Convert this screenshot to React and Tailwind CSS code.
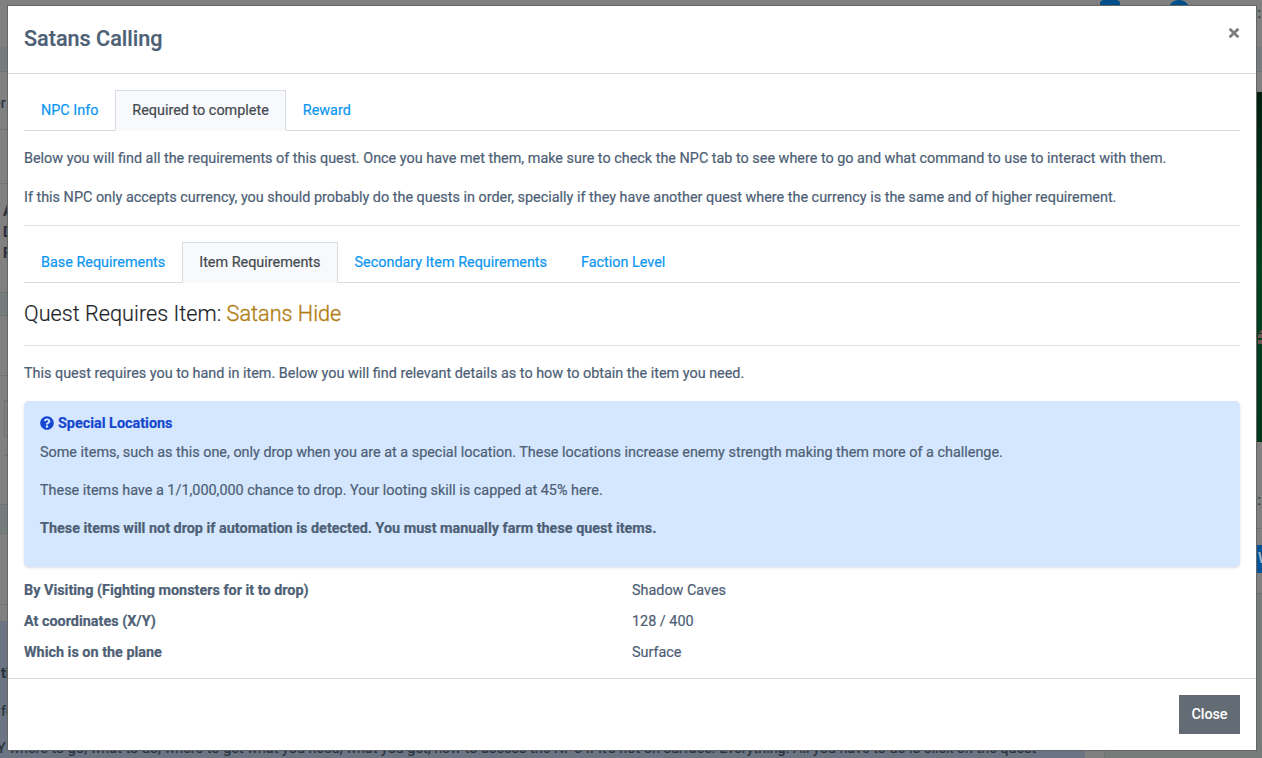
import React from "react";
import { FaQuestionCircle } from "react-icons/fa";

function Tabs({ items, active }) {
  return (
    <div className="flex h-[41px] border-b border-[#d8dbe0]">
      {items.map((t) => (
        <button
          key={t}
          className={
            "h-[41px] shrink-0 whitespace-nowrap border px-4 pt-px " +
            (t === active
              ? "border-[#d8dbe0] border-b-[#f8f9fc] bg-[#f8f9fc] text-[#44494f]"
              : "border-transparent text-[#0c96f2]")
          }
        >
          {t}
        </button>
      ))}
    </div>
  );
}

function Page() {
  return (
    <div className="flex h-full bg-[#808080] text-[#27303b]">
      <div className="flex w-[1085px] shrink-0 flex-col overflow-hidden">
        <div className="h-[47px]" />
        <div className="h-[25px] border-b border-[#6f7373] bg-[#757c7c]" />
        <div className="flex h-[58px] items-center border-b border-[#707274]">
          <span className="-ml-[7px] pt-[6px]">er</span>
        </div>
        <div className="h-[54px] border-b border-[#707274]" />
        <div className="h-[108px] pl-[3px] pt-[17px] font-bold leading-[21px]">
          <p>A</p>
          <p>D</p>
          <p>F</p>
        </div>
        <div className="h-[24px] border-y border-[#6f7373] bg-[#757c7c]" />
        <div className="h-[60px] border-b border-[#707274]" />
        <div className="h-[80px] pl-1 pt-6">
          <div className="h-[37px] border border-[#6c7075]" />
          <div className="mt-[18px] h-px bg-[#707274]" />
        </div>
        <div className="mt-[48px] h-[30px] shrink-0 border-y border-[#6f7373] bg-[#757c7c]" />
        <div className="h-[71px] shrink-0 border-b border-[#707274]" />
        <div className="mt-4 h-[137px] shrink-0 bg-[#6a7482] pt-[43px]">
          <p className="pl-px font-bold leading-5">ti</p>
          <p className="mt-[18px] pl-px leading-5">fo</p>
          <p className="-ml-[3px] mt-[17px] whitespace-nowrap leading-5">
            Y where to go, what to do, where to get what you need, what you get, how to access the NPC if it's not on surface. Everything. All you have to do is click on the quest
          </p>
        </div>
      </div>
      <div className="flex w-[177px] shrink-0 flex-col overflow-hidden">
        <div className="flex h-[47px] justify-between">
          <div className="ml-[15px] h-4 w-5 rounded bg-[#004f8a]" />
          <div className="-mr-[11px] h-[22px] w-[22px] rounded-full bg-[#004f8a]" />
          <span className="pr-px pt-[3px]">Gold:</span>
        </div>
        <div className="h-[25px] border-b border-[#6f7373] bg-[#757c7c]" />
        <div className="h-5" />
        <div className="flex h-[350px] items-center justify-end bg-gradient-to-b from-[#001f10] via-[#00431e] to-[#00371a]">
          <div className="-mr-1 mt-[138px] flex h-[15px] w-2 flex-col justify-between overflow-hidden rounded-tl-full">
            <div className="h-1 bg-[#725354]" />
            <div className="h-1 bg-[#725354]" />
            <div className="h-1 bg-[#725354]" />
          </div>
        </div>
        <div className="flex h-[87px] items-end justify-end border-b border-[#707274] pb-[16px] pr-px">Level:</div>
        <div className="h-[65px] border-b border-[#6b6f70] pt-4">
          <div className="h-7 overflow-hidden bg-[#045497] pl-[173px] font-medium leading-7 text-[#a8b8c8]">W</div>
        </div>
        <div className="ml-[19px] flex-1 border-l border-[#6f7373] bg-[#767c7a]" />
      </div>
    </div>
  );
}

const facts = [
  ["By Visiting (Fighting monsters for it to drop)", "Shadow Caves"],
  ["At coordinates (X/Y)", "128 / 400"],
  ["Which is on the plane", "Surface"],
];

export default function App() {
  return (
    <div className="relative h-[758px] w-[1262px] overflow-hidden font-['Roboto',sans-serif] text-[14.4px] [-webkit-text-stroke:0.2px]">
      <Page />
      <div className="absolute left-[7px] top-[5px] flex h-[746px] w-[1250px] flex-col border border-[#646666] bg-white leading-[21.6px] text-[#4d6075]">
        <header className="flex h-[68px] shrink-0 items-start justify-between border-b border-[#d8dbe0] px-4">
          <h5 className="pt-[17px] text-[21.6px] font-medium leading-[32px]">Satans Calling</h5>
          <button className="pt-[22px]" aria-label="Close">
            <svg width="12" height="10" viewBox="0 0 12 10" fill="none" stroke="#7c7c7c" strokeWidth="2.8">
              <path d="M1.6 .8 10.4 9.2M10.4 .8 1.6 9.2" />
            </svg>
          </button>
        </header>
        <main className="flex flex-1 flex-col px-4 pt-4">
          <Tabs items={["NPC Info", "Required to complete", "Reward"]} active="Required to complete" />
          <p className="mt-[17px]">
            Below you will find all the requirements of this quest. Once you have met them, make sure to check the NPC tab to see where to go and what command to use to interact with them.
          </p>
          <p className="mt-[17px]">
            If this NPC only accepts currency, you should probably do the quests in order, specially if they have another quest where the currency is the same and of higher requirement.
          </p>
          <hr className="mb-4 mt-[17px] border-[#dcdfe2]" />
          <Tabs
            items={["Base Requirements", "Item Requirements", "Secondary Item Requirements", "Faction Level"]}
            active="Item Requirements"
          />
          <h3 className="mt-4 h-[30px] text-[21.6px] font-light leading-[30px] tracking-[0.04px] text-[#212529]">
            Quest Requires Item: <span className="text-[#b07d12] [-webkit-text-stroke:0.35px]">Satans Hide</span>
          </h3>
          <hr className="mt-4 border-[#dcdfe2]" />
          <p className="mt-[17px]">
            This quest requires you to hand in item. Below you will find relevant details as to how to obtain the item you need.
          </p>
          <section className="mt-4 h-[166px] rounded-[5px] bg-[#d5e7fe] px-4 pt-3 shadow-sm">
            <h4 className="flex items-center gap-1 font-bold text-[#1647d0]">
              <FaQuestionCircle className="-mt-0.5 size-[14px]" />
              Special Locations
            </h4>
            <p className="mt-2">
              Some items, such as this one, only drop when you are at a special location. These locations increase enemy strength making them more of a challenge.
            </p>
            <p className="mt-4">These items have a 1/1,000,000 chance to drop. Your looting skill is capped at 45% here.</p>
            <p className="mt-4 font-bold">
              These items will not drop if automation is detected. You must manually farm these quest items.
            </p>
          </section>
          <dl className="mt-3 grid grid-cols-2 gap-y-[9.4px] pt-px">
            {facts.map(([k, v]) => (
              <React.Fragment key={k}>
                <dt className="font-bold">{k}</dt>
                <dd>{v}</dd>
              </React.Fragment>
            ))}
          </dl>
        </main>
        <footer className="flex h-[72px] shrink-0 justify-end border-t border-[#d8dbe0] px-4 pt-4">
          <button className="h-[39px] w-[61px] bg-[#636b74] font-medium tracking-[-0.1px] text-white [-webkit-text-stroke:0]">Close</button>
        </footer>
      </div>
    </div>
  );
}
